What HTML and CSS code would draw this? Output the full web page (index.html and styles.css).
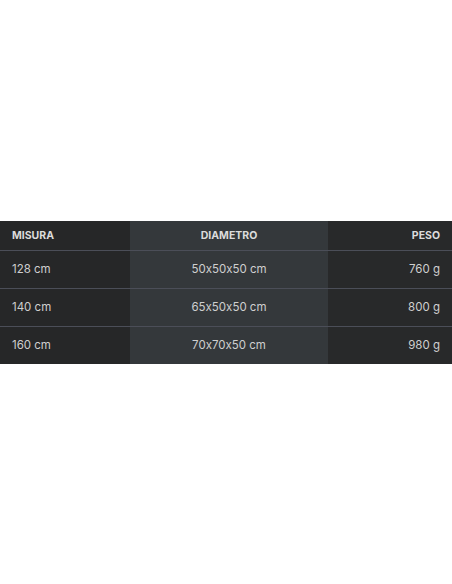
FILE: index.html
```html
<!DOCTYPE html>
<html lang="it">
<head>
    <meta charset="UTF-8">
    <meta name="viewport" content="width=device-width, initial-scale=1.0">
    <title>Misure</title>
    <link rel="stylesheet" href="styles.css">
</head>
<body>
    <div class="table-wrap">
        <table class="size-table">
            <thead>
                <tr>
                    <th class="col-left">MISURA</th>
                    <th class="col-mid">DIAMETRO</th>
                    <th class="col-right">PESO</th>
                </tr>
            </thead>
            <tbody>
                <tr>
                    <td class="col-left">128 cm</td>
                    <td class="col-mid">50x50x50 cm</td>
                    <td class="col-right">760 g</td>
                </tr>
                <tr>
                    <td class="col-left">140 cm</td>
                    <td class="col-mid">65x50x50 cm</td>
                    <td class="col-right">800 g</td>
                </tr>
                <tr>
                    <td class="col-left">160 cm</td>
                    <td class="col-mid">70x70x50 cm</td>
                    <td class="col-right">980 g</td>
                </tr>
            </tbody>
        </table>
    </div>
</body>
</html>
```

FILE: styles.css
```css
body {
    margin: 0;
    background-color: #fff;
    font-family: Inter, "Open Sans", sans-serif;
    font-feature-settings: "calt" 0;
}
.table-wrap {
    min-height: 100vh;
    display: flex;
    align-items: center;
}
.size-table {
    width: 100%;
    border-collapse: collapse;
    color: #cfcfcf;
    font-size: 11.5px;
}
.size-table th {
    height: 29px;
    padding: 0 12px;
    font-size: 10.5px;
    font-weight: 700;
    color: #dcdcdc;
    border-bottom: 1px solid #4b4e58;
}
.size-table td {
    height: 37px;
    padding: 0 12px;
    border-bottom: 1px solid #4b4e58;
}
.size-table tbody tr:last-child td {
    border-bottom: none;
}
.col-left {
    width: 106px;
    text-align: left;
    background-color: #262728;
}
.col-mid {
    width: 174px;
    text-align: center;
    background-color: #34383b;
}
.col-right {
    text-align: right;
    background-color: #28292a;
}
```
